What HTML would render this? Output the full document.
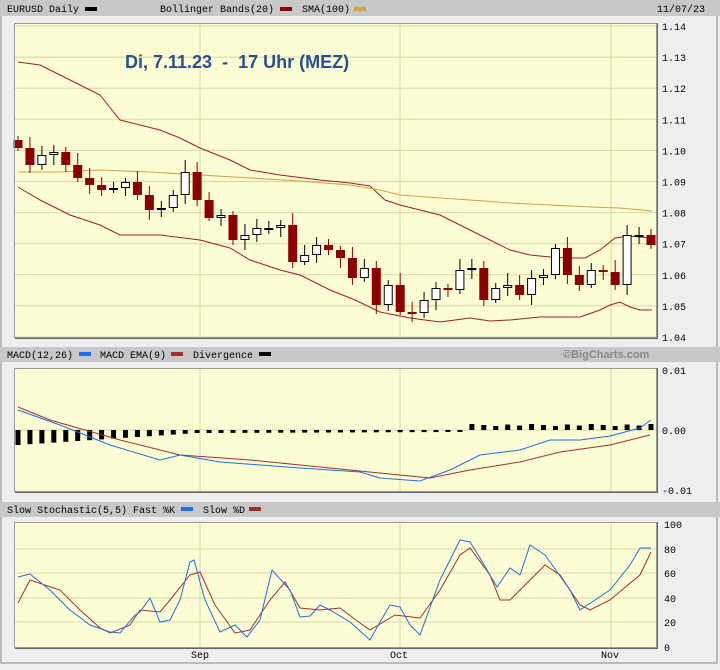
<!DOCTYPE html>
<html><head><meta charset="utf-8"><style>
body{margin:0;background:#eee;width:720px;height:665px;overflow:hidden;font-family:"Liberation Mono",monospace}
svg text{font-family:"Liberation Mono",monospace;font-size:10px;fill:#000}
</style></head><body>
<svg id="s" width="720" height="665" xmlns="http://www.w3.org/2000/svg">
<defs><pattern id="p" width="2" height="2" patternUnits="userSpaceOnUse"><rect width="2" height="2" fill="#ffffd8"/><rect width="1" height="1" fill="#f4f4cc"/></pattern></defs>
<rect x="0" y="0" width="720" height="665" fill="#eeeeee"/>
<rect x="1" y="0" width="716" height="663" fill="none" stroke="#888" stroke-width="1"/>
<rect x="0" y="0" width="720" height="16" fill="#c8c8c8"/>
<text x="7" y="12">EURUSD Daily</text><rect x="85" y="7" width="12" height="4" fill="#000"/>
<text x="160" y="12">Bollinger Bands(20)</text><rect x="280" y="7" width="12" height="4" fill="#8b0000"/>
<text x="302" y="12">SMA(100)</text><rect x="354" y="7" width="12" height="4" fill="#d4a040"/>
<text x="657" y="12">11/07/23</text>
<rect x="0" y="347" width="720" height="15" fill="#c8c8c8"/>
<text x="7" y="358">MACD(12,26)</text><rect x="79" y="352" width="12" height="4" fill="#1e6ee8"/>
<text x="100" y="358">MACD EMA(9)</text><rect x="171" y="352" width="12" height="4" fill="#a03030"/>
<text x="193" y="358">Divergence</text><rect x="259" y="352" width="12" height="4" fill="#000"/>
<text x="563" y="358" style="font-family:'Liberation Sans',sans-serif;font-weight:bold;fill:#888;font-size:11px">©BigCharts.com</text>
<rect x="0" y="502" width="720" height="15" fill="#c8c8c8"/>
<text x="7" y="513">Slow Stochastic(5,5) Fast %K</text><rect x="181" y="507" width="12" height="4" fill="#1e6ee8"/>
<text x="203" y="513">Slow %D</text><rect x="249" y="507" width="12" height="4" fill="#a03030"/>
<g id="g"></g>
</svg>
<script>
const g=document.getElementById('g');let h='';
function L(pts,c,w){h+=`<polyline fill="none" stroke="${c}" stroke-width="${w||1}" points="${pts}"/>`}
function panel(t,b){h+=`<rect x="14" y="${t}" width="642" height="${b-t}" fill="url(#p)"/>`;
[200,400,611].forEach(x=>h+=`<line x1="${x}" y1="${t}" x2="${x}" y2="${b}" stroke="#d8d8a0"/>`)}
function border(t,b){h+=`<rect x="14.5" y="${t+.5}" width="642" height="${b-t}" fill="none" stroke="#999"/><line x1="15" y1="${b+1.5}" x2="657" y2="${b+1.5}" stroke="#666"/><line x1="657.5" y1="${t}" x2="657.5" y2="${b+2}" stroke="#666"/>`}
panel(23,337);
for(let i=0;i<=10;i++){let y=26+i*31.1;h+=`<line x1="14" y1="${y}" x2="656" y2="${y}" stroke="#d8d8a0"/><text x="662" y="${y+4}">${(1.14-i*0.01).toFixed(2)}</text>`}
h+=`<text x="125" y="68" style="font-family:'Liberation Sans',sans-serif;font-weight:bold;font-size:18px;fill:#2a5090;white-space:pre" xml:space="preserve">Di, 7.11.23  -  17 Uhr (MEZ)</text>`;
L("18,62 40,65 60,75 80,85 100,95 120,120 140,125 160,130 180,138 200,148 230,160 250,170 280,175 320,180 350,183 370,186 385,200 400,205 420,210 440,215 460,225 490,240 510,250 530,255 550,257 570,258 585,258 600,250 615,238 630,236 650,238","#a02020");
L("18,187 40,200 70,215 100,225 120,235 160,235 200,240 230,248 250,260 280,270 300,275 330,290 355,300 380,312 395,315 410,318 440,322 470,318 490,321 510,320 540,317 580,317 600,310 610,305 620,302 630,307 640,310 652,310","#a02020");
L("18,172 60,172 100,170 150,172 200,175 250,178 300,181 350,185 380,190 400,195 440,198 470,200 510,203 550,205 590,207 620,208 652,211","#d4a040");
const cl=[148,165,155,152,165,178,185,190,188,182,195,210,208,195,172,200,218,215,240,235,228,228,225,262,255,245,250,258,278,268,305,285,312,313,300,288,290,270,268,300,288,285,295,278,275,248,275,285,270,272,285,235,235,245];
let prev=140;const n=cl.length;
cl.forEach((c,i)=>{let x=18+i*(633/(n-1));let o=prev;prev=c;let red=c>o;let top=Math.min(o,c),bot=Math.max(o,c);if(bot-top<2)bot=top+2;
let hi=top-4-((i*7)%9),lo=bot+3+((i*5)%8);
h+=`<line x1="${x}" y1="${hi}" x2="${x}" y2="${lo}" stroke="${red?'#8b0000':'#000'}"/>`;
h+=red?`<rect x="${x-4.5}" y="${top}" width="9" height="${bot-top}" fill="#8b0000"/>`:`<rect x="${x-4}" y="${top+.5}" width="8" height="${bot-top-1}" fill="#fff" stroke="#000"/>`});
border(23,337);
panel(368,491);
[370,430,490].forEach((y,i)=>{if(i==1)h+=`<line x1="14" y1="${y}" x2="656" y2="${y}" stroke="#d8d8a0"/>`;h+=`<text x="662" y="${y+4}">${['0.01','0.00','-0.01'][i]}</text>`});
for(let i=0;i<n;i++){let x=18+i*(633/(n-1));let v=i<16?(15-i*0.8):i<38?(3-(i-16)*0.05):(-4-((i*3)%5)*0.5);let y0=430,y1=430+v;h+=`<rect x="${x-2.5}" y="${Math.min(y0,y1)}" width="5" height="${Math.max(1.5,Math.abs(v))}" fill="#000"/>`}
L("18,407 50,420 120,440 180,455 250,460 330,468 400,475 430,478 470,470 520,462 560,452 610,445 650,435","#a03030");
L("18,410 60,425 110,445 160,460 180,455 220,462 300,468 360,472 380,478 420,481 450,470 480,455 520,450 550,440 580,440 610,436 640,428 651,420","#1e6ee8");
border(368,491);
panel(522,647);
[[100,524],[80,549],[60,573],[40,598],[20,622],[0,647]].forEach(([v,y])=>{if(v>0&&v<100)h+=`<line x1="14" y1="${y}" x2="656" y2="${y}" stroke="#d8d8a0"/>`;h+=`<text x="664" y="${y+4}">${v}</text>`});
L("18,603 30,580 60,590 80,610 100,628 110,633 130,625 140,610 160,612 170,600 190,575 200,572 215,605 235,633 250,630 270,600 285,582 300,608 320,610 340,608 360,623 370,630 395,615 420,618 440,590 460,555 470,548 490,575 500,600 510,600 530,580 545,565 560,575 580,605 590,610 610,600 640,575 651,552","#a03030");
L("18,577 30,574 50,590 70,610 90,625 110,632 120,633 135,615 140,612 150,598 160,622 170,620 180,600 190,562 194,560 205,600 220,632 235,625 247,637 260,620 272,570 290,590 300,617 310,616 320,605 330,610 350,622 370,640 380,622 390,605 400,607 410,625 420,635 440,580 460,540 470,542 480,558 497,587 510,568 520,575 530,545 545,555 570,590 580,610 595,600 610,590 630,565 640,548 651,548","#1e6ee8");
border(522,647);
h+=`<text x="191" y="658">Sep</text><text x="390" y="658">Oct</text><text x="601" y="658">Nov</text>`;
g.innerHTML=h;
</script>
</body></html>
